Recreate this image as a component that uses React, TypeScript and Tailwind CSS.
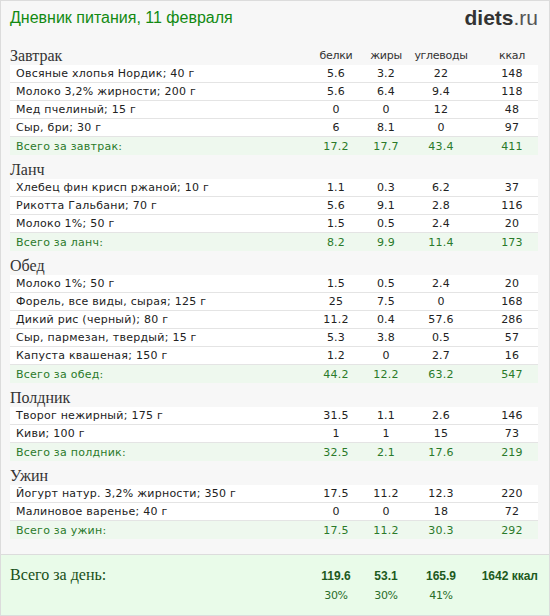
type Item = { name: string; p: string; f: string; c: string; k: string };
type Meal = { title: string; totalLabel: string; items: Item[]; total: Item };

const meals: Meal[] = [
  {
    title: "Завтрак",
    totalLabel: "Всего за завтрак:",
    items: [
      { name: "Овсяные хлопья Нордик; 40 г", p: "5.6", f: "3.2", c: "22", k: "148" },
      { name: "Молоко 3,2% жирности; 200 г", p: "5.6", f: "6.4", c: "9.4", k: "118" },
      { name: "Мед пчелиный; 15 г", p: "0", f: "0", c: "12", k: "48" },
      { name: "Сыр, бри; 30 г", p: "6", f: "8.1", c: "0", k: "97" },
    ],
    total: { name: "", p: "17.2", f: "17.7", c: "43.4", k: "411" },
  },
  {
    title: "Ланч",
    totalLabel: "Всего за ланч:",
    items: [
      { name: "Хлебец фин крисп ржаной; 10 г", p: "1.1", f: "0.3", c: "6.2", k: "37" },
      { name: "Рикотта Гальбани; 70 г", p: "5.6", f: "9.1", c: "2.8", k: "116" },
      { name: "Молоко 1%; 50 г", p: "1.5", f: "0.5", c: "2.4", k: "20" },
    ],
    total: { name: "", p: "8.2", f: "9.9", c: "11.4", k: "173" },
  },
  {
    title: "Обед",
    totalLabel: "Всего за обед:",
    items: [
      { name: "Молоко 1%; 50 г", p: "1.5", f: "0.5", c: "2.4", k: "20" },
      { name: "Форель, все виды, сырая; 125 г", p: "25", f: "7.5", c: "0", k: "168" },
      { name: "Дикий рис (черный); 80 г", p: "11.2", f: "0.4", c: "57.6", k: "286" },
      { name: "Сыр, пармезан, твердый; 15 г", p: "5.3", f: "3.8", c: "0.5", k: "57" },
      { name: "Капуста квашеная; 150 г", p: "1.2", f: "0", c: "2.7", k: "16" },
    ],
    total: { name: "", p: "44.2", f: "12.2", c: "63.2", k: "547" },
  },
  {
    title: "Полдник",
    totalLabel: "Всего за полдник:",
    items: [
      { name: "Творог нежирный; 175 г", p: "31.5", f: "1.1", c: "2.6", k: "146" },
      { name: "Киви; 100 г", p: "1", f: "1", c: "15", k: "73" },
    ],
    total: { name: "", p: "32.5", f: "2.1", c: "17.6", k: "219" },
  },
  {
    title: "Ужин",
    totalLabel: "Всего за ужин:",
    items: [
      { name: "Йогурт натур. 3,2% жирности; 350 г", p: "17.5", f: "11.2", c: "12.3", k: "220" },
      { name: "Малиновое варенье; 40 г", p: "0", f: "0", c: "18", k: "72" },
    ],
    total: { name: "", p: "17.5", f: "11.2", c: "30.3", k: "292" },
  },
];

const cols = "grid grid-cols-[1fr_50px_50px_60px_67px]";

function Row({ label, v, total }: { label: string; v: Item; total?: boolean }) {
  return (
    <div
      className={`${cols} h-[18px] items-center leading-[17px] text-[11px] tracking-[0.25px] ${
        total
          ? "bg-[#eef8ee] text-[#2a7a2a]"
          : "bg-white text-[#222] border-b border-[#e4e4e4]"
      }`}
    >
      <div className="pl-[6px] whitespace-nowrap">{label}</div>
      <div className="text-center">{v.p}</div>
      <div className="text-center">{v.f}</div>
      <div className="text-center">{v.c}</div>
      <div className="text-center pl-[15px]">{v.k}</div>
    </div>
  );
}

function Section({ meal, first }: { meal: Meal; first?: boolean }) {
  return (
    <div>
      <div className={`${cols} h-[24px] items-end`}>
        <div className="font-['Liberation_Serif',serif] text-[16px] leading-[19px] text-[#333]">
          {meal.title}
        </div>
        {first && (
          <>
            <div className="text-center text-[11px] leading-[19px] tracking-[-0.3px] text-[#333]">белки</div>
            <div className="text-center text-[11px] leading-[19px] tracking-[-0.3px] text-[#333]">жиры</div>
            <div className="text-center text-[11px] leading-[19px] tracking-[-0.3px] text-[#333]">углеводы</div>
            <div className="text-center pl-[15px] text-[11px] leading-[19px] tracking-[-0.3px] text-[#333]">ккал</div>
          </>
        )}
      </div>
      {meal.items.map((it, i) => (
        <Row key={i} label={it.name} v={it} />
      ))}
      <Row label={meal.totalLabel} v={meal.total} total />
    </div>
  );
}

export default function App() {
  return (
    <div className="w-[550px] h-[616px] border border-[#dcdcdc] bg-[#f7f7f7] flex flex-col font-['DejaVu_Sans',Verdana,sans-serif]">
      <div className="h-[42px] flex justify-between items-start pl-[9px] pr-[11px] pt-[7px]">
        <h1 className="font-['Liberation_Sans',Arial,sans-serif] text-[16px] leading-[20px] text-[#128a12]">
          Дневник питания, 11 февраля
        </h1>
        <div className="font-['Liberation_Sans',Arial,sans-serif] text-[21px] leading-[20px] text-[#333]">
          <span className="font-bold">diets</span>
          <span className="text-[#555]">.ru</span>
        </div>
      </div>

      <div className="flex-1 pl-[9px] pr-[11px] -mt-[2px]">
        {meals.map((m, i) => (
          <Section key={m.title} meal={m} first={i === 0} />
        ))}
      </div>

      {/* итого за день */}
      <div className="h-[61px] border-t border-[#dcdcdc] bg-[#e9fbe9] pl-[9px] pr-[11px] pt-[11px]">
        <div className={`${cols} items-start`}>
          <div className="font-['Liberation_Serif',serif] text-[16px] leading-[18px] text-[#174f17]">
            Всего за день:
          </div>
          <div className="text-center font-['Liberation_Sans',Arial,sans-serif] font-bold text-[12px] leading-[20px] text-[#1d5a1d]">119.6</div>
          <div className="text-center font-['Liberation_Sans',Arial,sans-serif] font-bold text-[12px] leading-[20px] text-[#1d5a1d]">53.1</div>
          <div className="text-center font-['Liberation_Sans',Arial,sans-serif] font-bold text-[12px] leading-[20px] text-[#1d5a1d]">165.9</div>
          <div className="text-right font-['Liberation_Sans',Arial,sans-serif] font-bold text-[12px] leading-[20px] text-[#1d5a1d]">1642 ккал</div>
        </div>
        <div className={`${cols} text-[11px] leading-[20px] text-[#2a6e2a] tracking-[-0.3px]`}>
          <div></div>
          <div className="text-center">30%</div>
          <div className="text-center">30%</div>
          <div className="text-center">41%</div>
          <div></div>
        </div>
      </div>
    </div>
  );
}
